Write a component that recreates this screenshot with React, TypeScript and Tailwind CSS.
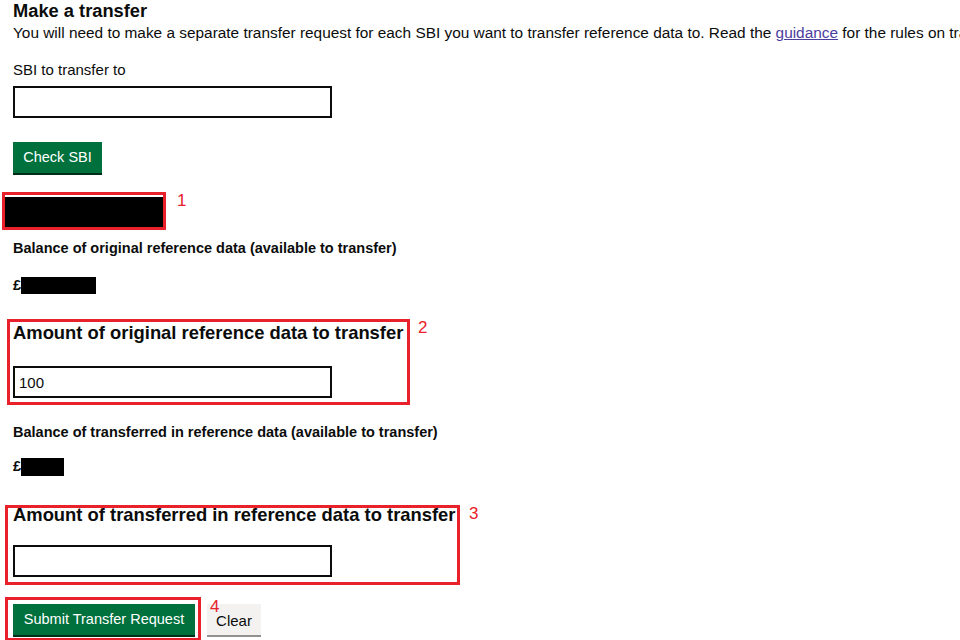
import React from 'react'

const font = { fontFamily: '"Liberation Sans", Arial, sans-serif' }

function Note({ n }: { n: string }) {
  return <span className="text-[17px] leading-none text-[#e8212b]">{n}</span>
}

function TextInput({ value }: { value?: string }) {
  return (
    <input
      type="text"
      defaultValue={value}
      className="block h-[32px] w-[319px] border-2 border-[#0b0c0c] bg-white px-[4px] text-[15px] text-[#0b0c0c] outline-none"
    />
  )
}

export default function App() {
  return (
    <div className="h-[640px] w-[960px] overflow-hidden bg-white text-[#0b0c0c]" style={font}>
      <div className="flex flex-col items-start px-[13px]">
        <h1 className="whitespace-nowrap text-[18.3px] font-bold leading-[22px]">Make a transfer</h1>
        <p className="mt-[1px] whitespace-nowrap text-[15.4px] leading-[20px]">
          You will need to make a separate transfer request for each SBI you want to transfer reference data to. Read the{' '}
          <a href="#" className="text-[#4b3d9e] underline">guidance</a> for the rules on transfers
        </p>

        <label className="mt-[17px] text-[15px] leading-[20px]">SBI to transfer to</label>
        <div className="mt-[6px]">
          <TextInput />
        </div>

        <button className="mt-[24px] h-[31px] w-[89px] bg-[#00703c] text-[14.5px] text-white shadow-[0_2px_0_#002d18]">
          Check SBI
        </button>

        {/* 1: redacted SBI name */}
        <div className="mt-[19px] -ml-[11px] flex items-start gap-[11px]">
          <div className="h-[38px] w-[164px] border-[3px] border-[#e8212b] pt-[2px]">
            <div className="h-[30px] w-[158px] bg-black" />
          </div>
          <Note n="1" />
        </div>

        <p className="mt-[9px] whitespace-nowrap text-[14.5px] font-bold leading-[18px]">
          Balance of original reference data (available to transfer)
        </p>
        <div className="mt-[20px] flex h-[17px] items-center text-[14.5px] font-bold">
          <span>£</span>
          <span className="h-[17px] w-[75px] bg-black" />
        </div>

        {/* 2: amount of original */}
        <div className="mt-[25px] -ml-[6px] flex items-start gap-[8px]">
          <div className="h-[86px] w-[403px] border-[3px] border-[#e8212b] pl-[3px]">
            <h2 className="whitespace-nowrap text-[18.4px] font-bold leading-[22px]">
              Amount of original reference data to transfer
            </h2>
            <div className="mt-[22px]">
              <TextInput value="100" />
            </div>
          </div>
          <Note n="2" />
        </div>

        <p className="mt-[18px] whitespace-nowrap text-[14.5px] font-bold leading-[18px]">
          Balance of transferred in reference data (available to transfer)
        </p>
        <div className="mt-[17px] flex h-[18px] items-center text-[14.5px] font-bold">
          <span>£</span>
          <span className="h-[18px] w-[43px] bg-black" />
        </div>

        {/* 3: amount of transferred in */}
        <div className="mt-[29px] -ml-[8px] flex items-start gap-[9px]">
          <div className="h-[80px] w-[455px] border-[3px] border-[#e8212b] pl-[5px]">
            <h2 className="-mt-[4px] whitespace-nowrap text-[18.4px] font-bold leading-[22px]">
              Amount of transferred in reference data to transfer
            </h2>
            <div className="mt-[19px]">
              <TextInput />
            </div>
          </div>
          <Note n="3" />
        </div>

        {/* 4: submit */}
        <div className="mt-[12px] -ml-[8px] flex items-start gap-[6px]">
          <div className="relative h-[44px] w-[196px] border-[3px] border-[#e8212b] pl-[5px] pt-[4px]">
            <button className="h-[31px] w-[182px] bg-[#00703c] text-[14.5px] text-white shadow-[0_2px_0_#002d18]">
              Submit Transfer Request
            </button>
            <span className="absolute left-[202px] -top-[5px]">
              <Note n="4" />
            </span>
          </div>
          <button className="mt-[7px] h-[31px] w-[54px] bg-[#f3f2f1] pt-[4px] text-[15px] text-[#0b0c0c] shadow-[0_2px_0_#929191]">
            Clear
          </button>
        </div>
      </div>
    </div>
  )
}
